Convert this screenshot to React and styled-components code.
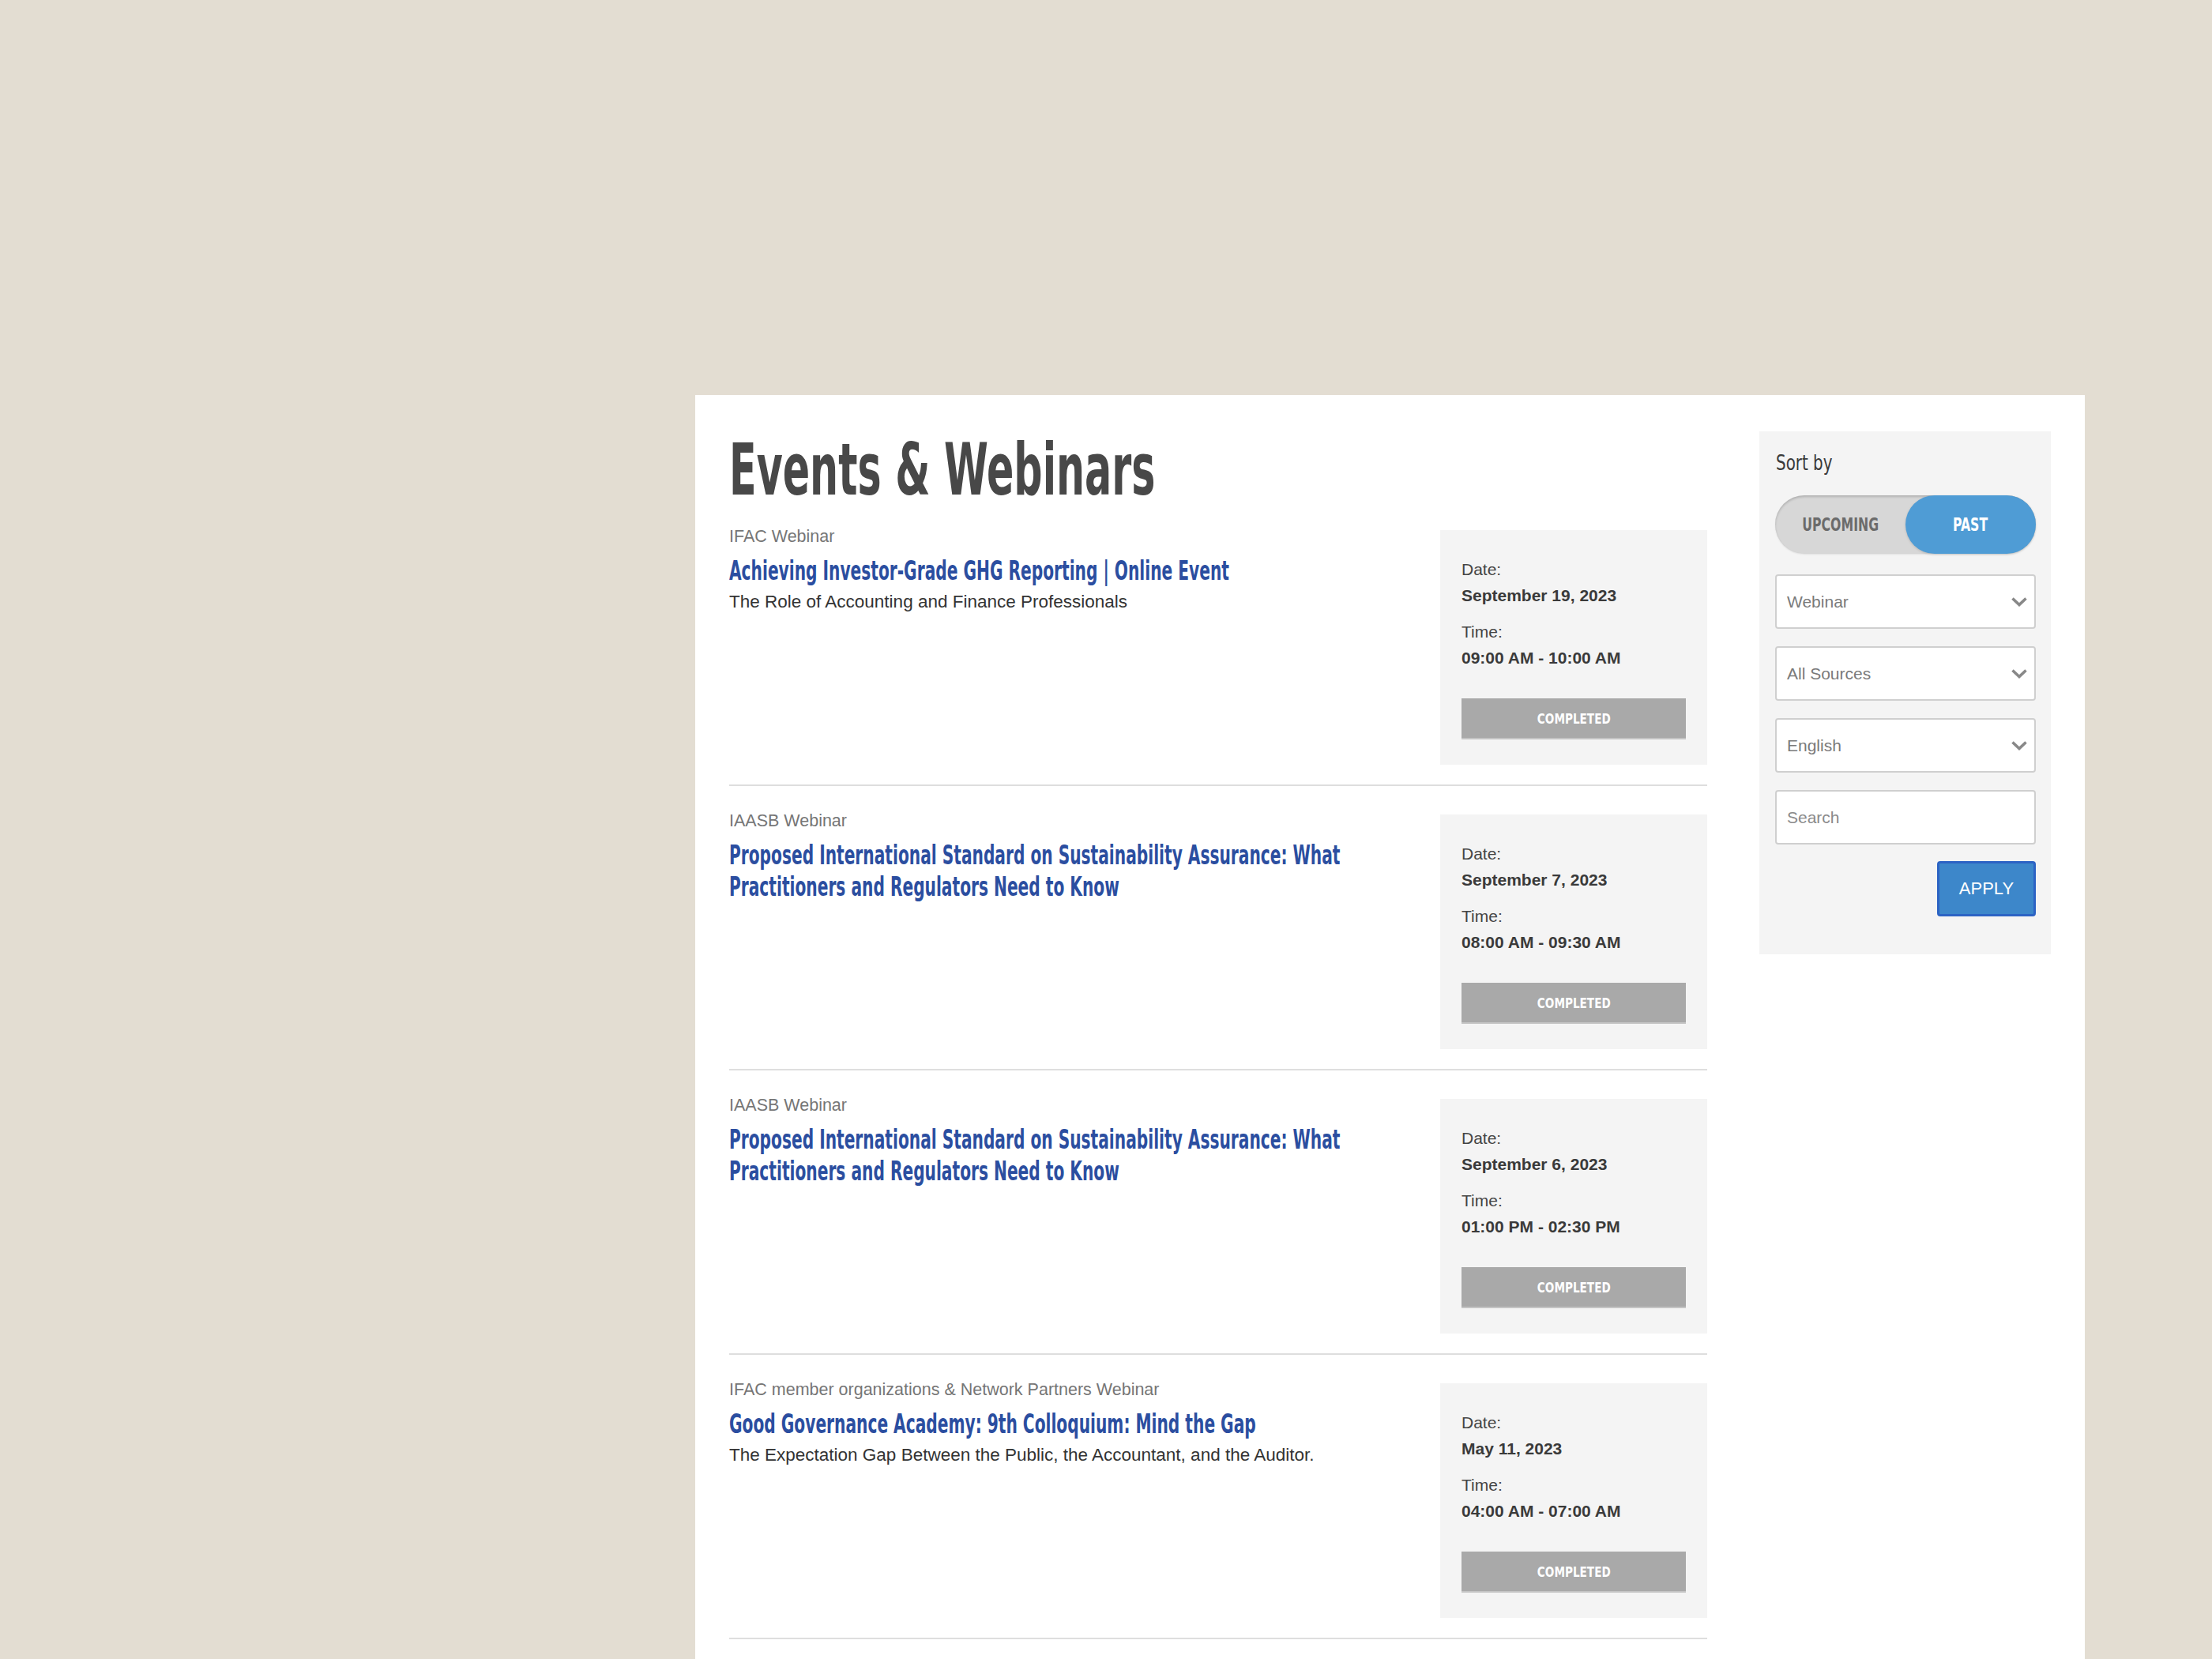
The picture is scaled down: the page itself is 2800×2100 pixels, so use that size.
import React from 'react';
import styled, { createGlobalStyle, css } from 'styled-components';

const GlobalStyle = createGlobalStyle`
  html, body {
    margin: 0;
    padding: 0;
    background: #e3ddd2;
  }
  body {
    font-family: "Liberation Sans", Arial, sans-serif;
  }
`;

// no Oswald offline: DejaVu Sans Condensed, squeezed horizontally where needed
const condensed = css`
  font-family: "DejaVu Sans Condensed", "DejaVu Sans", sans-serif;
`;

const TITLE_SCALE = 0.68;

const Squeeze = styled.span`
  display: inline-block;
  transform: scaleX(${p => p.$x});
  transform-origin: ${p => p.$origin || 'center'};
`;

const Page = styled.div`
  height: 2100px;
  overflow: hidden;
  padding: 500px 161px 0 880px;
  box-sizing: border-box;
`;

const Panel = styled.div`
  background: #ffffff;
  min-height: 1700px;
  padding: 46px 43px;
  display: grid;
  grid-template-columns: 1238px 369px;
  column-gap: 66px;
  align-items: start;
`;

const Main = styled.div`
  display: flex;
  flex-direction: column;
`;

const Heading = styled.h1`
  ${condensed};
  font-size: 90px;
  line-height: 97px;
  font-weight: 700;
  color: #484848;
  margin: 0 0 -8px;
  white-space: nowrap;
  transform: scaleX(0.626);
  transform-origin: left center;
`;

const EventRow = styled.div`
  display: flex;
  gap: 40px;
  padding: 36px 0 25px;
  border-bottom: 2px solid #dedede;
`;

const EventText = styled.div`
  flex: 1;
  min-width: 0;
`;

const Category = styled.div`
  font-size: 21.5px;
  line-height: 16px;
  color: #767676;
`;

const Title = styled.a`
  ${condensed};
  display: block;
  width: calc(100% / ${TITLE_SCALE});
  margin-top: 16px;
  font-size: 33px;
  line-height: 40px;
  font-weight: 700;
  color: #2b4ea0;
  text-decoration: none;
  transform: scaleX(${TITLE_SCALE});
  transform-origin: left top;
`;

const Subtitle = styled.div`
  margin-top: 6px;
  font-size: 22.5px;
  line-height: 26px;
  color: #333;
`;

const DateBox = styled.div`
  width: 338px;
  box-sizing: border-box;
  flex-shrink: 0;
  background: #f4f4f4;
  padding: 37px 27px 32px;
`;

const Label = styled.div`
  font-size: 21px;
  line-height: 26px;
  color: #444;
  margin-top: ${p => p.$gap || 0}px;
`;

const Value = styled.div`
  font-size: 21px;
  line-height: 26px;
  font-weight: 700;
  color: #3a3a3a;
  margin-top: 7px;
`;

const StatusButton = styled.div`
  ${condensed};
  margin-top: 38px;
  height: 52px;
  background: #a9a9a9;
  border-bottom: 2px solid #c4c4c4;
  box-sizing: border-box;
  color: #fff;
  font-size: 18px;
  font-weight: 700;
  display: flex;
  align-items: center;
  justify-content: center;
`;

const Sidebar = styled.aside`
  background: #f4f4f4;
  padding: 23px 19px 48px 20px;
  display: flex;
  flex-direction: column;
`;

const SortLabel = styled.div`
  ${condensed};
  font-size: 26px;
  line-height: 34px;
  font-weight: 400;
  color: #3a3a3a;
  padding-left: 1px;
`;

const Toggle = styled.div`
  margin-top: 24px;
  height: 74px;
  border-radius: 37px;
  background: #d7d7d7;
  box-shadow: inset 0 2px 3px rgba(0, 0, 0, 0.18), 0 1px 2px rgba(0, 0, 0, 0.08);
  display: grid;
  grid-template-columns: 1fr 1fr;
`;

const Segment = styled.div`
  ${condensed};
  border-radius: 37px;
  display: flex;
  align-items: center;
  justify-content: center;
  font-size: 23px;
  font-weight: 700;
  color: ${p => (p.$active ? '#ffffff' : '#6b6b6b')};
  background: ${p => (p.$active ? '#4f9cd5' : 'transparent')};
  box-shadow: ${p => (p.$active ? '0 1px 3px rgba(0,0,0,0.15)' : 'none')};
`;

const Filters = styled.div`
  margin-top: 26px;
  display: flex;
  flex-direction: column;
  gap: 22px;
`;

const SelectBox = styled.div`
  height: 69px;
  box-sizing: border-box;
  background: #fff;
  border: 2px solid #cfcfcf;
  border-radius: 4px;
  padding: 0 8px 0 13px;
  display: flex;
  align-items: center;
  justify-content: space-between;
  font-size: 21px;
  color: #7a7a7a;
`;

const SearchInput = styled.input`
  height: 69px;
  box-sizing: border-box;
  background: #fff;
  border: 2px solid #cfcfcf;
  border-radius: 4px;
  padding: 0 13px;
  font-family: "Liberation Sans", Arial, sans-serif;
  font-size: 21px;
  color: #555;
  outline: none;
  &::placeholder {
    color: #8a8a8a;
  }
`;

const ApplyButton = styled.button`
  align-self: flex-end;
  margin-top: 21px;
  width: 125px;
  height: 70px;
  background: #3d87ca;
  border: 3px solid #2c63c4;
  border-radius: 4px;
  color: #fff;
  font-family: "Liberation Sans", Arial, sans-serif;
  font-size: 22px;
  cursor: pointer;
`;

const Chevron = () => (
  <svg width="22" height="14" viewBox="0 0 22 14" fill="none">
    <path d="M2.5 2.5l8.5 8 8.5-8" stroke="#888" strokeWidth="3.6" strokeLinecap="butt" />
  </svg>
);

const events = [
  {
    category: 'IFAC Webinar',
    title: 'Achieving Investor-Grade GHG Reporting | Online Event',
    subtitle: 'The Role of Accounting and Finance Professionals',
    date: 'September 19, 2023',
    time: '09:00 AM - 10:00 AM',
  },
  {
    category: 'IAASB Webinar',
    title: 'Proposed International Standard on Sustainability Assurance: What Practitioners and Regulators Need to Know',
    date: 'September 7, 2023',
    time: '08:00 AM - 09:30 AM',
  },
  {
    category: 'IAASB Webinar',
    title: 'Proposed International Standard on Sustainability Assurance: What Practitioners and Regulators Need to Know',
    date: 'September 6, 2023',
    time: '01:00 PM - 02:30 PM',
  },
  {
    category: 'IFAC member organizations & Network Partners Webinar',
    title: 'Good Governance Academy: 9th Colloquium: Mind the Gap',
    subtitle: 'The Expectation Gap Between the Public, the Accountant, and the Auditor.',
    date: 'May 11, 2023',
    time: '04:00 AM - 07:00 AM',
  },
];

const App = () => (
  <>
    <GlobalStyle />
    <Page>
      <Panel>
        <Main>
          <Heading>Events &amp; Webinars</Heading>
          {events.map((ev, i) => (
            <EventRow key={i}>
              <EventText>
                <Category>{ev.category}</Category>
                <Title href="#">{ev.title}</Title>
                {ev.subtitle && <Subtitle>{ev.subtitle}</Subtitle>}
              </EventText>
              <DateBox>
                <Label>Date:</Label>
                <Value>{ev.date}</Value>
                <Label $gap={20}>Time:</Label>
                <Value>{ev.time}</Value>
                <StatusButton>
                  <Squeeze $x={0.84}>COMPLETED</Squeeze>
                </StatusButton>
              </DateBox>
            </EventRow>
          ))}
        </Main>
        <Sidebar>
          <SortLabel>
            <Squeeze $x={0.85} $origin="left center">Sort by</Squeeze>
          </SortLabel>
          <Toggle>
            <Segment><Squeeze $x={0.76}>UPCOMING</Squeeze></Segment>
            <Segment $active><Squeeze $x={0.76}>PAST</Squeeze></Segment>
          </Toggle>
          <Filters>
            <SelectBox>Webinar<Chevron /></SelectBox>
            <SelectBox>All Sources<Chevron /></SelectBox>
            <SelectBox>English<Chevron /></SelectBox>
            <SearchInput placeholder="Search" />
          </Filters>
          <ApplyButton>APPLY</ApplyButton>
        </Sidebar>
      </Panel>
    </Page>
  </>
);

export default App;
